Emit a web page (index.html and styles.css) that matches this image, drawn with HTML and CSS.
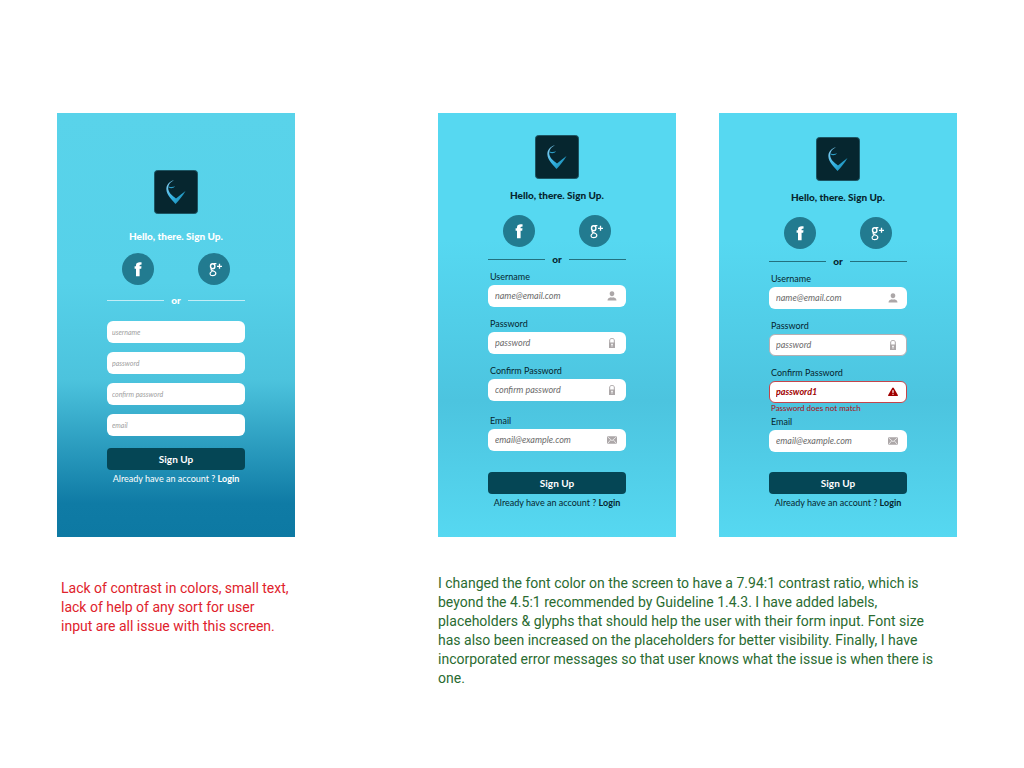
FILE: index.html
```
<!DOCTYPE html>
<html lang="en">
<head>
<meta charset="utf-8">
<meta name="viewport" content="width=device-width, initial-scale=1">
<title>Sign up screen: accessibility review</title>
<link rel="stylesheet" href="styles.css">
</head>
<body>
<svg class="sprite" aria-hidden="true">
  <defs>
    <linearGradient id="mark" x1="0" y1="0" x2="1" y2="1">
      <stop offset="0" stop-color="#8fd0f2"/>
      <stop offset="0.55" stop-color="#2fb0e0"/>
      <stop offset="1" stop-color="#14799c"/>
    </linearGradient>
  </defs>
  <symbol id="logo" viewBox="0 0 44 44">
    <rect x="0.5" y="0.5" width="43" height="43" rx="3" fill="#06262f" stroke="#1c5563"/>
    <path d="M20 10.2C14.5 11.5 12.2 15.5 12.4 19.5C12.7 25 17 28.500 21.500 34C25 30.500 28.500 26 31.500 21C28.500 23.500 25.500 25.500 22 28.500C18 25.500 14.500 22.500 14.200 18.500C14 14.800 16.500 11.800 20 10.200Z" fill="url(#mark)"/>
    <path d="M14.500 16.200C16.500 17.600 19 17.200 21.200 16.300C19.500 18.500 16.500 18.600 14.300 17.300Z" fill="#2c9cc6"/>
  </symbol>
  <symbol id="facebook" viewBox="0 0 32 32">
    <path d="M14 23.300V15.800H12.600V13.200H14V12.200C14 10 15.700 9.200 17.600 9.200C18.500 9.200 19.200 9.300 19.700 9.400L19.400 11.800C18.400 11.600 17.600 11.700 17.600 12.600V13.200H19.500L19.200 15.800H17.600V23.300Z" fill="#fff"/>
  </symbol>
  <symbol id="google" viewBox="0 0 32 32">
    <g fill="none" stroke="#fff">
      <ellipse cx="14.700" cy="13.300" rx="2.200" ry="2.500" stroke-width="1.400"/>
      <path d="M15.500 10.700H18.400M14 15.700C11.800 17 14 17.600 16 18.300C19 19.600 18 22.700 14.800 22.700C11.500 22.700 10.900 19.700 14.200 18.300" stroke-width="1.200"/>
      <path d="M21.500 10.800V15.800M19 13.300H24" stroke-width="1.300"/>
    </g>
  </symbol>
  <symbol id="user" viewBox="0 0 10 10">
    <path d="M5 0.300C6.600 0.300 7.500 1.500 7.300 3C7.200 4.200 6.500 5.300 5 5.300S2.800 4.200 2.700 3C2.500 1.500 3.400 0.300 5 0.300ZM0.500 9.600C0.500 7.200 2 6.700 3.700 6.200C4.500 6.700 5.500 6.700 6.300 6.200C8 6.700 9.500 7.200 9.500 9.600Z"/>
  </symbol>
  <symbol id="lock" viewBox="0 0 10 10">
    <path d="M2.700 5V2C2.700 0 7.300 0 7.300 2V5" fill="none" stroke="currentColor"/>
    <path fill-rule="evenodd" d="M2 4.600H8V10H2ZM4.200 5.800V7H4.600V8.700H5.400V7H5.800V5.800Z"/>
  </symbol>
  <symbol id="mail" viewBox="0 0 10 10">
    <rect x="0" y="1.200" width="10" height="7.600" rx="1.200"/>
    <path d="M1 2.200L5 5.700L9 2.200M1 8L3.600 5M9 8L6.400 5" fill="none" stroke="#fff" stroke-width="0.700"/>
  </symbol>
  <symbol id="warning" viewBox="0 0 10 10">
    <path fill-rule="evenodd" d="M5 0.500Q5.500 0.500 5.800 1L9.800 8Q10.200 9 9.200 9H0.800Q-0.200 9 0.200 8L4.200 1Q4.500 0.500 5 0.500ZM4.300 3.300L4.500 6.300H5.500L5.700 3.300ZM4.500 7V8H5.500V7Z"/>
  </symbol>
</svg>

<main class="board">
  <section class="before">
    <article class="screen screen-original">
      <svg class="logo" role="img" aria-label="Logo"><use href="#logo"/></svg>
      <h2 class="title">Hello, there. Sign Up.</h2>
      <div class="social">
        <button class="social-button" type="button" aria-label="Sign up with Facebook"><svg><use href="#facebook"/></svg></button>
        <button class="social-button" type="button" aria-label="Sign up with Google Plus"><svg><use href="#google"/></svg></button>
      </div>
      <div class="divider">or</div>
      <form class="form">
        <div class="control"><input class="input" type="text" aria-label="username" placeholder="username"></div>
        <div class="control"><input class="input" type="text" aria-label="password" placeholder="password"></div>
        <div class="control"><input class="input" type="text" aria-label="confirm password" placeholder="confirm password"></div>
        <div class="control"><input class="input" type="email" aria-label="email" placeholder="email"></div>
        <button class="submit" type="button">Sign Up</button>
      </form>
      <p class="login">Already have an account ? <a href="#login">Login</a></p>
    </article>
    <p class="note note-issue">Lack of contrast in colors, small text,<br>lack of help of any sort for user<br>input are all issue with this screen.</p>
  </section>

  <section class="after">
    <div class="screens">
      <article class="screen screen-improved">
        <svg class="logo" role="img" aria-label="Logo"><use href="#logo"/></svg>
        <h2 class="title">Hello, there. Sign Up.</h2>
        <div class="social">
          <button class="social-button" type="button" aria-label="Sign up with Facebook"><svg><use href="#facebook"/></svg></button>
          <button class="social-button" type="button" aria-label="Sign up with Google Plus"><svg><use href="#google"/></svg></button>
        </div>
        <div class="divider">or</div>
        <form class="form">
          <div class="field">
            <label class="label" for="a-user">Username</label>
            <div class="control"><input class="input" id="a-user" type="text" placeholder="name@email.com"><svg class="icon"><use href="#user"/></svg></div>
          </div>
          <div class="field">
            <label class="label" for="a-pass">Password</label>
            <div class="control"><input class="input" id="a-pass" type="text" placeholder="password"><svg class="icon"><use href="#lock"/></svg></div>
          </div>
          <div class="field">
            <label class="label" for="a-confirm">Confirm Password</label>
            <div class="control"><input class="input" id="a-confirm" type="text" placeholder="confirm password"><svg class="icon"><use href="#lock"/></svg></div>
          </div>
          <div class="field field-email">
            <label class="label" for="a-email">Email</label>
            <div class="control"><input class="input" id="a-email" type="email" placeholder="email@example.com"><svg class="icon"><use href="#mail"/></svg></div>
          </div>
          <button class="submit" type="button">Sign Up</button>
        </form>
        <p class="login">Already have an account ? <a href="#login">Login</a></p>
      </article>

      <article class="screen screen-improved screen-error">
        <svg class="logo" role="img" aria-label="Logo"><use href="#logo"/></svg>
        <h2 class="title">Hello, there. Sign Up.</h2>
        <div class="social">
          <button class="social-button" type="button" aria-label="Sign up with Facebook"><svg><use href="#facebook"/></svg></button>
          <button class="social-button" type="button" aria-label="Sign up with Google Plus"><svg><use href="#google"/></svg></button>
        </div>
        <div class="divider">or</div>
        <form class="form">
          <div class="field">
            <label class="label" for="b-user">Username</label>
            <div class="control"><input class="input" id="b-user" type="text" placeholder="name@email.com"><svg class="icon"><use href="#user"/></svg></div>
          </div>
          <div class="field">
            <label class="label" for="b-pass">Password</label>
            <div class="control control-outlined"><input class="input" id="b-pass" type="text" placeholder="password"><svg class="icon"><use href="#lock"/></svg></div>
          </div>
          <div class="field field-invalid">
            <label class="label" for="b-confirm">Confirm Password</label>
            <div class="control"><input class="input" id="b-confirm" type="text" value="password1" aria-invalid="true" aria-describedby="b-error"><svg class="icon"><use href="#warning"/></svg></div>
            <p class="error" id="b-error">Password does not match</p>
          </div>
          <div class="field field-email">
            <label class="label" for="b-email">Email</label>
            <div class="control"><input class="input" id="b-email" type="email" placeholder="email@example.com"><svg class="icon"><use href="#mail"/></svg></div>
          </div>
          <button class="submit" type="button">Sign Up</button>
        </form>
        <p class="login">Already have an account ? <a href="#login">Login</a></p>
      </article>
    </div>
    <p class="note note-fix">I changed the font color on the screen to have a 7.94:1 contrast ratio, which is<br>beyond the 4.5:1 recommended by Guideline 1.4.3. I have added labels,<br>placeholders &amp; glyphs that should help the user with their form input. Font size<br>has also been increased on the placeholders for better visibility. Finally, I have<br>incorporated error messages so that user knows what the issue is when there is<br>one.</p>
  </section>
</main>
</body>
</html>
```
FILE: styles.css
```
* {
  box-sizing: border-box;
}

body {
  margin: 0;
  background: #fff;
  font-family: Lato, "Open Sans", sans-serif;
}

h2,
p {
  margin: 0;
}

button,
input {
  border: 0;
  padding: 0;
  font-family: inherit;
}

.sprite {
  position: absolute;
  width: 0;
  height: 0;
}

.board {
  display: grid;
  grid-template-columns: minmax(0, 238fr) minmax(0, 519fr);
  column-gap: 143px;
  padding: 113px 67px 60px 57px;
}

.before {
  display: flex;
  flex-direction: column;
}

.screens {
  display: grid;
  grid-template-columns: 1fr 1fr;
  column-gap: 43px;
}

.screen {
  display: flex;
  flex-direction: column;
  padding: 22px 21% 26px;
  color: #06262f;
}

.screen-original {
  padding-top: 57px;
  padding-bottom: 50px;
  color: #fff;
  background: linear-gradient(#59d3ea 0%, #56d1e9 40%, #4cc3dd 63%, #0f7ba5 92%, #0d79a3 100%);
}

.screen-improved {
  background: linear-gradient(#56d8f1 0%, #56d8f1 30%, #4cc4df 68%, #56d8f1 100%);
}

.screen-error {
  padding-top: 24px;
}

.logo {
  width: 44px;
  height: 44px;
  align-self: center;
}

.title {
  margin-top: 8px;
  font-size: 10px;
  line-height: 16px;
  font-weight: 900;
  text-align: center;
  white-space: nowrap;
}

.screen-original .title {
  margin-top: 14px;
}

.social {
  display: flex;
  justify-content: space-between;
  margin-top: 12px;
  padding: 0 15px;
}

.screen-original .social {
  margin-top: 9px;
}

.social-button {
  width: 32px;
  height: 32px;
  border-radius: 50%;
  background: #227b90;
}

.social-button svg {
  display: block;
  width: 32px;
  height: 32px;
}

.divider {
  display: flex;
  align-items: center;
  gap: 7px;
  margin-top: 4px;
  font-size: 10px;
  line-height: 16px;
  font-weight: 900;
}

.screen-original .divider {
  margin-top: 7px;
}

.divider::before,
.divider::after {
  content: "";
  flex: 1;
  height: 1px;
  background: #23717f;
}

.screen-original .divider::before,
.screen-original .divider::after {
  background: #c2edf6;
}

.form {
  display: flex;
  flex-direction: column;
  margin-top: 2px;
}

.screen-original .form {
  gap: 9px;
  margin-top: 13px;
}

.field + .field {
  margin-top: 9px;
}

.field + .field-email {
  margin-top: 12px;
}

.field-invalid + .field-email {
  margin-top: 0;
}

.label {
  display: block;
  padding-left: 2px;
  font-size: 9px;
  line-height: 16px;
}

.control {
  display: flex;
  align-items: center;
  height: 22px;
  padding: 0 9px 0 7px;
  border-radius: 6px;
  background: #fff;
}

.screen-original .control {
  padding: 0 5px;
}

.control-outlined {
  border: 1px solid #b5b0b4;
  padding: 0 8px 0 6px;
}

.input {
  flex: 1;
  min-width: 0;
  background: transparent;
  font-size: 9px;
  line-height: 16px;
  font-style: italic;
  color: #5f5f5f;
}

.input::placeholder {
  color: #6b6b6b;
  opacity: 1;
}

.screen-original .input {
  font-size: 7px;
}

.screen-original .input::placeholder {
  color: #a0a0a0;
}

.icon {
  width: 10px;
  height: 10px;
  color: #aca7a8;
  fill: currentColor;
}

.field-invalid .control {
  border: 1px solid #c4454b;
  padding: 0 8px 0 6px;
}

.field-invalid .input {
  font-weight: 700;
  color: #a00000;
}

.field-invalid .icon {
  color: #a00000;
}

.error {
  padding-left: 2px;
  font-size: 8px;
  line-height: 11px;
  color: #a80f16;
  white-space: nowrap;
}

.submit {
  height: 22px;
  margin-top: 21px;
  border-radius: 4px;
  background: #054655;
  color: #fff;
  font-size: 10px;
  line-height: 16px;
  font-weight: 700;
}

.screen-error .submit {
  margin-top: 20px;
}

.screen-original .submit {
  margin-top: 3px;
}

.login {
  margin-top: 1px;
  font-size: 9px;
  line-height: 16px;
  text-align: center;
  white-space: nowrap;
}

.login a {
  color: inherit;
  font-weight: 700;
  text-decoration: none;
}

.note {
  font-family: Roboto, Lato, sans-serif;
  font-size: 14px;
  line-height: 19px;
  white-space: nowrap;
}

.note-issue {
  margin-top: 42px;
  padding-left: 4px;
  color: #e0222c;
}

.note-fix {
  margin-top: 37px;
  color: #2a6b31;
}
```
